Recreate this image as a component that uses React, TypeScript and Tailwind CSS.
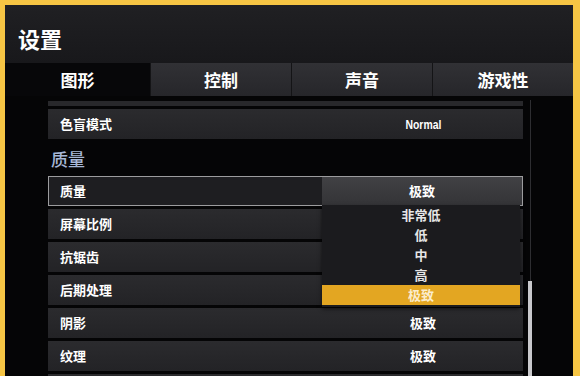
const cjk = { fontFamily: '"Noto Sans CJK SC", "Noto Sans", sans-serif' };

const rowsAfter = [
  { label: '屏幕比例', value: '' },
  { label: '抗锯齿', value: '' },
  { label: '后期处理', value: '' },
  { label: '阴影', value: '极致' },
  { label: '纹理', value: '极致' },
  { label: '', value: '' },
];

const options = ['非常低', '低', '中', '高', '极致'];

function Row({ label, value, latin }: { label: string; value: string; latin?: boolean }) {
  return (
    <div className="flex h-[30px] shrink-0 items-center bg-gradient-to-b from-[#2b2b2e] to-[#232326]">
      <div className="flex-1 pl-[12px] text-[13px] font-bold text-white">{label}</div>
      <div className="w-[200px] text-center text-[13px] font-bold text-white">
        {latin ? <span className="inline-block scale-x-[0.8] font-['Liberation_Sans',sans-serif]">{value}</span> : value}
      </div>
    </div>
  );
}

export default function App() {
  const tabs = ['图形', '控制', '声音', '游戏性'];
  return (
    <div className="h-[376px] w-[580px] overflow-hidden bg-[#f6c544] pl-[5px] pr-[7px] pt-[5px]" style={cjk}>
      <div className="flex h-full flex-col bg-[#050506]">
        {/* Header */}
        <div className="h-[58px] shrink-0 bg-gradient-to-b from-[#202023] to-[#18181b] pl-[13px] pt-[22px]">
          <div className="text-[22px] font-bold leading-none text-white">设置</div>
        </div>

        {/* Tabs */}
        <div className="flex h-[33px] shrink-0">
          {tabs.map((t, i) => (
            <div
              key={t}
              className={
                i === 0
                  ? 'flex w-[145px] items-center justify-center bg-[#070709] text-[17px] font-bold text-white'
                  : 'flex flex-1 items-center justify-center border-l border-[#141416] bg-gradient-to-b from-[#313135] to-[#26262a] text-[17px] font-bold text-white'
              }
            >
              {t}
            </div>
          ))}
        </div>

        {/* Content */}
        <div className="flex min-h-0 flex-1 pl-[43px]">
          <div className="flex w-[475px] flex-col gap-[3px] pt-[5px]">
            <div className="h-[5px] shrink-0 bg-[#28282b]" />
            <Row label="色盲模式" value="Normal" latin />
            <div className="flex h-[31px] shrink-0 items-center pl-[3px] pt-[3px] text-[17px] font-medium text-[#a6b7d6]">质量</div>

            {/* Selected row with open dropdown */}
            <div className="relative z-10 flex h-[30px] shrink-0 border border-[#9c9c9e] bg-[#1e1e21]">
              <div className="flex flex-1 items-center pl-[11px] text-[13px] font-bold text-white">质量</div>
              <div className="flex w-[200px] items-center justify-center bg-gradient-to-b from-[#414144] to-[#343437] text-[13px] font-bold text-white">
                极致
              </div>
              <div className="absolute left-[273px] top-[28px] w-[198px] bg-[#1b1b1e] pb-[2px] shadow-[0_2px_4px_rgba(0,0,0,0.6)]">
                {options.map((o, i) => (
                  <div
                    key={o}
                    className={
                      i === options.length - 1
                        ? 'flex h-[20px] items-center justify-center bg-[#e3a622] text-[13px] font-bold text-[#fbeccb]'
                        : 'flex h-[20px] items-center justify-center text-[13px] font-bold text-[#e6e6e6]'
                    }
                  >
                    {o}
                  </div>
                ))}
              </div>
            </div>

            {rowsAfter.map((r, i) => (
              <Row key={i} label={r.label} value={r.value} />
            ))}
          </div>

          {/* Scrollbar */}
          <div className="ml-[5px] flex w-[4px] flex-col pt-[4px]">
            <div className="mx-auto h-[181px] w-px shrink-0 bg-[#2e2e31]" />
            <div className="flex-1 bg-[#c9c9cc]" />
          </div>
        </div>
      </div>
    </div>
  );
}
